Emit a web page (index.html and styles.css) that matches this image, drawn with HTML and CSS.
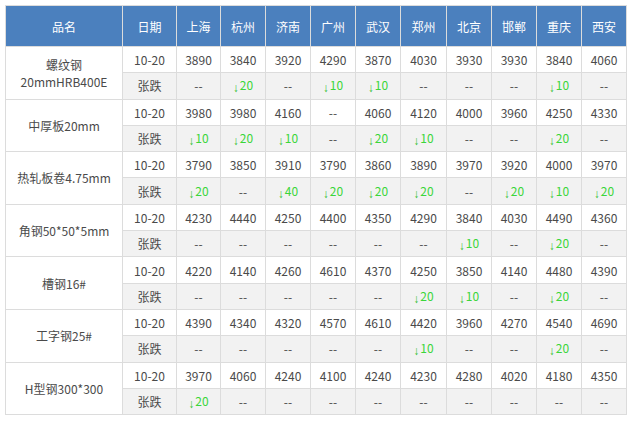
FILE: index.html
```html
<!DOCTYPE html>
<html lang="zh">
<head>
<meta charset="utf-8">
<link rel="stylesheet" href="styles.css">
</head>
<body>
<table class="price">
<colgroup>
<col class="c-name"><col class="c-date"><col class="c-city-s"><col class="c-city"><col class="c-city"><col class="c-city"><col class="c-city"><col class="c-city-w"><col class="c-city"><col class="c-city"><col class="c-city"><col class="c-city">
</colgroup>
<thead>
<tr><th>品名</th><th>日期</th><th>上海</th><th>杭州</th><th>济南</th><th>广州</th><th>武汉</th><th>郑州</th><th>北京</th><th>邯郸</th><th>重庆</th><th>西安</th></tr>
</thead>
<tbody>
<tr><td class="name" rowspan="2">螺纹钢<br>20mmHRB400E</td><td>10-20</td><td>3890</td><td>3840</td><td>3920</td><td>4290</td><td>3870</td><td>4030</td><td>3930</td><td>3930</td><td>3840</td><td>4060</td></tr>
<tr class="chg"><td>张跌</td><td>--</td><td class="dn"><span class="ar">↓</span>20</td><td>--</td><td class="dn"><span class="ar">↓</span>10</td><td class="dn"><span class="ar">↓</span>10</td><td>--</td><td>--</td><td>--</td><td class="dn"><span class="ar">↓</span>10</td><td>--</td></tr>

<tr><td class="name" rowspan="2">中厚板20mm</td><td>10-20</td><td>3980</td><td>3980</td><td>4160</td><td>--</td><td>4060</td><td>4120</td><td>4000</td><td>3960</td><td>4250</td><td>4330</td></tr>
<tr class="chg"><td>张跌</td><td class="dn"><span class="ar">↓</span>10</td><td class="dn"><span class="ar">↓</span>20</td><td class="dn"><span class="ar">↓</span>10</td><td>--</td><td class="dn"><span class="ar">↓</span>20</td><td class="dn"><span class="ar">↓</span>10</td><td>--</td><td>--</td><td class="dn"><span class="ar">↓</span>20</td><td>--</td></tr>

<tr><td class="name" rowspan="2">热轧板卷4.75mm</td><td>10-20</td><td>3790</td><td>3850</td><td>3910</td><td>3790</td><td>3860</td><td>3890</td><td>3970</td><td>3920</td><td>4000</td><td>3970</td></tr>
<tr class="chg"><td>张跌</td><td class="dn"><span class="ar">↓</span>20</td><td>--</td><td class="dn"><span class="ar">↓</span>40</td><td class="dn"><span class="ar">↓</span>20</td><td class="dn"><span class="ar">↓</span>20</td><td class="dn"><span class="ar">↓</span>20</td><td>--</td><td class="dn"><span class="ar">↓</span>20</td><td class="dn"><span class="ar">↓</span>10</td><td class="dn"><span class="ar">↓</span>20</td></tr>

<tr><td class="name" rowspan="2">角钢50*50*5mm</td><td>10-20</td><td>4230</td><td>4440</td><td>4250</td><td>4400</td><td>4350</td><td>4290</td><td>3840</td><td>4030</td><td>4490</td><td>4360</td></tr>
<tr class="chg"><td>张跌</td><td>--</td><td>--</td><td>--</td><td>--</td><td>--</td><td>--</td><td class="dn"><span class="ar">↓</span>10</td><td>--</td><td class="dn"><span class="ar">↓</span>20</td><td>--</td></tr>

<tr><td class="name" rowspan="2">槽钢16#</td><td>10-20</td><td>4220</td><td>4140</td><td>4260</td><td>4610</td><td>4370</td><td>4250</td><td>3850</td><td>4140</td><td>4480</td><td>4390</td></tr>
<tr class="chg"><td>张跌</td><td>--</td><td>--</td><td>--</td><td>--</td><td>--</td><td class="dn"><span class="ar">↓</span>20</td><td class="dn"><span class="ar">↓</span>10</td><td>--</td><td class="dn"><span class="ar">↓</span>20</td><td>--</td></tr>

<tr><td class="name" rowspan="2">工字钢25#</td><td>10-20</td><td>4390</td><td>4340</td><td>4320</td><td>4570</td><td>4610</td><td>4420</td><td>3960</td><td>4270</td><td>4540</td><td>4690</td></tr>
<tr class="chg"><td>张跌</td><td>--</td><td>--</td><td>--</td><td>--</td><td>--</td><td class="dn"><span class="ar">↓</span>10</td><td>--</td><td>--</td><td class="dn"><span class="ar">↓</span>20</td><td>--</td></tr>

<tr><td class="name" rowspan="2">H型钢300*300</td><td>10-20</td><td>3970</td><td>4060</td><td>4240</td><td>4100</td><td>4240</td><td>4230</td><td>4280</td><td>4020</td><td>4180</td><td>4350</td></tr>
<tr class="chg"><td>张跌</td><td class="dn"><span class="ar">↓</span>20</td><td>--</td><td>--</td><td>--</td><td>--</td><td>--</td><td>--</td><td>--</td><td>--</td><td>--</td></tr>
</tbody>
</table>
</body>
</html>
```
FILE: styles.css
```css
html, body {
  margin: 0;
  padding: 0;
  background: #ffffff;
}
body {
  padding: 5px 0 0 5px;
  font-family: "Noto Sans CJK SC", "Noto Sans", sans-serif;
  font-size: 12px;
  color: #4a4a4a;
}
.price {
  border-collapse: collapse;
  table-layout: fixed;
  width: 622px;
}
.c-name { width: 117px; }
.c-date { width: 54px; }
.c-city-s { width: 44px; }
.c-city { width: 45px; }
.c-city-w { width: 46px; }
.price th,
.price td {
  border: 1px solid #dcdcdc;
  padding: 0;
  text-align: center;
  vertical-align: middle;
  white-space: nowrap;
  line-height: 17px;
}
.price th {
  height: 40px;
  background: #4b80be;
  color: #ffffff;
  font-weight: normal;
}
.price tbody tr {
  height: 26.3px;
}
.price tr.chg td {
  background: #f2f2f2;
}
.price td.name {
  background: #ffffff;
}
.price td.dn {
  color: #3ad63a;
}
.ar {
  font-family: "Liberation Sans", sans-serif;
  font-size: 12px;
  position: relative;
  top: 2px;
  margin-right: 1px;
  color: #30c030;
}
```
